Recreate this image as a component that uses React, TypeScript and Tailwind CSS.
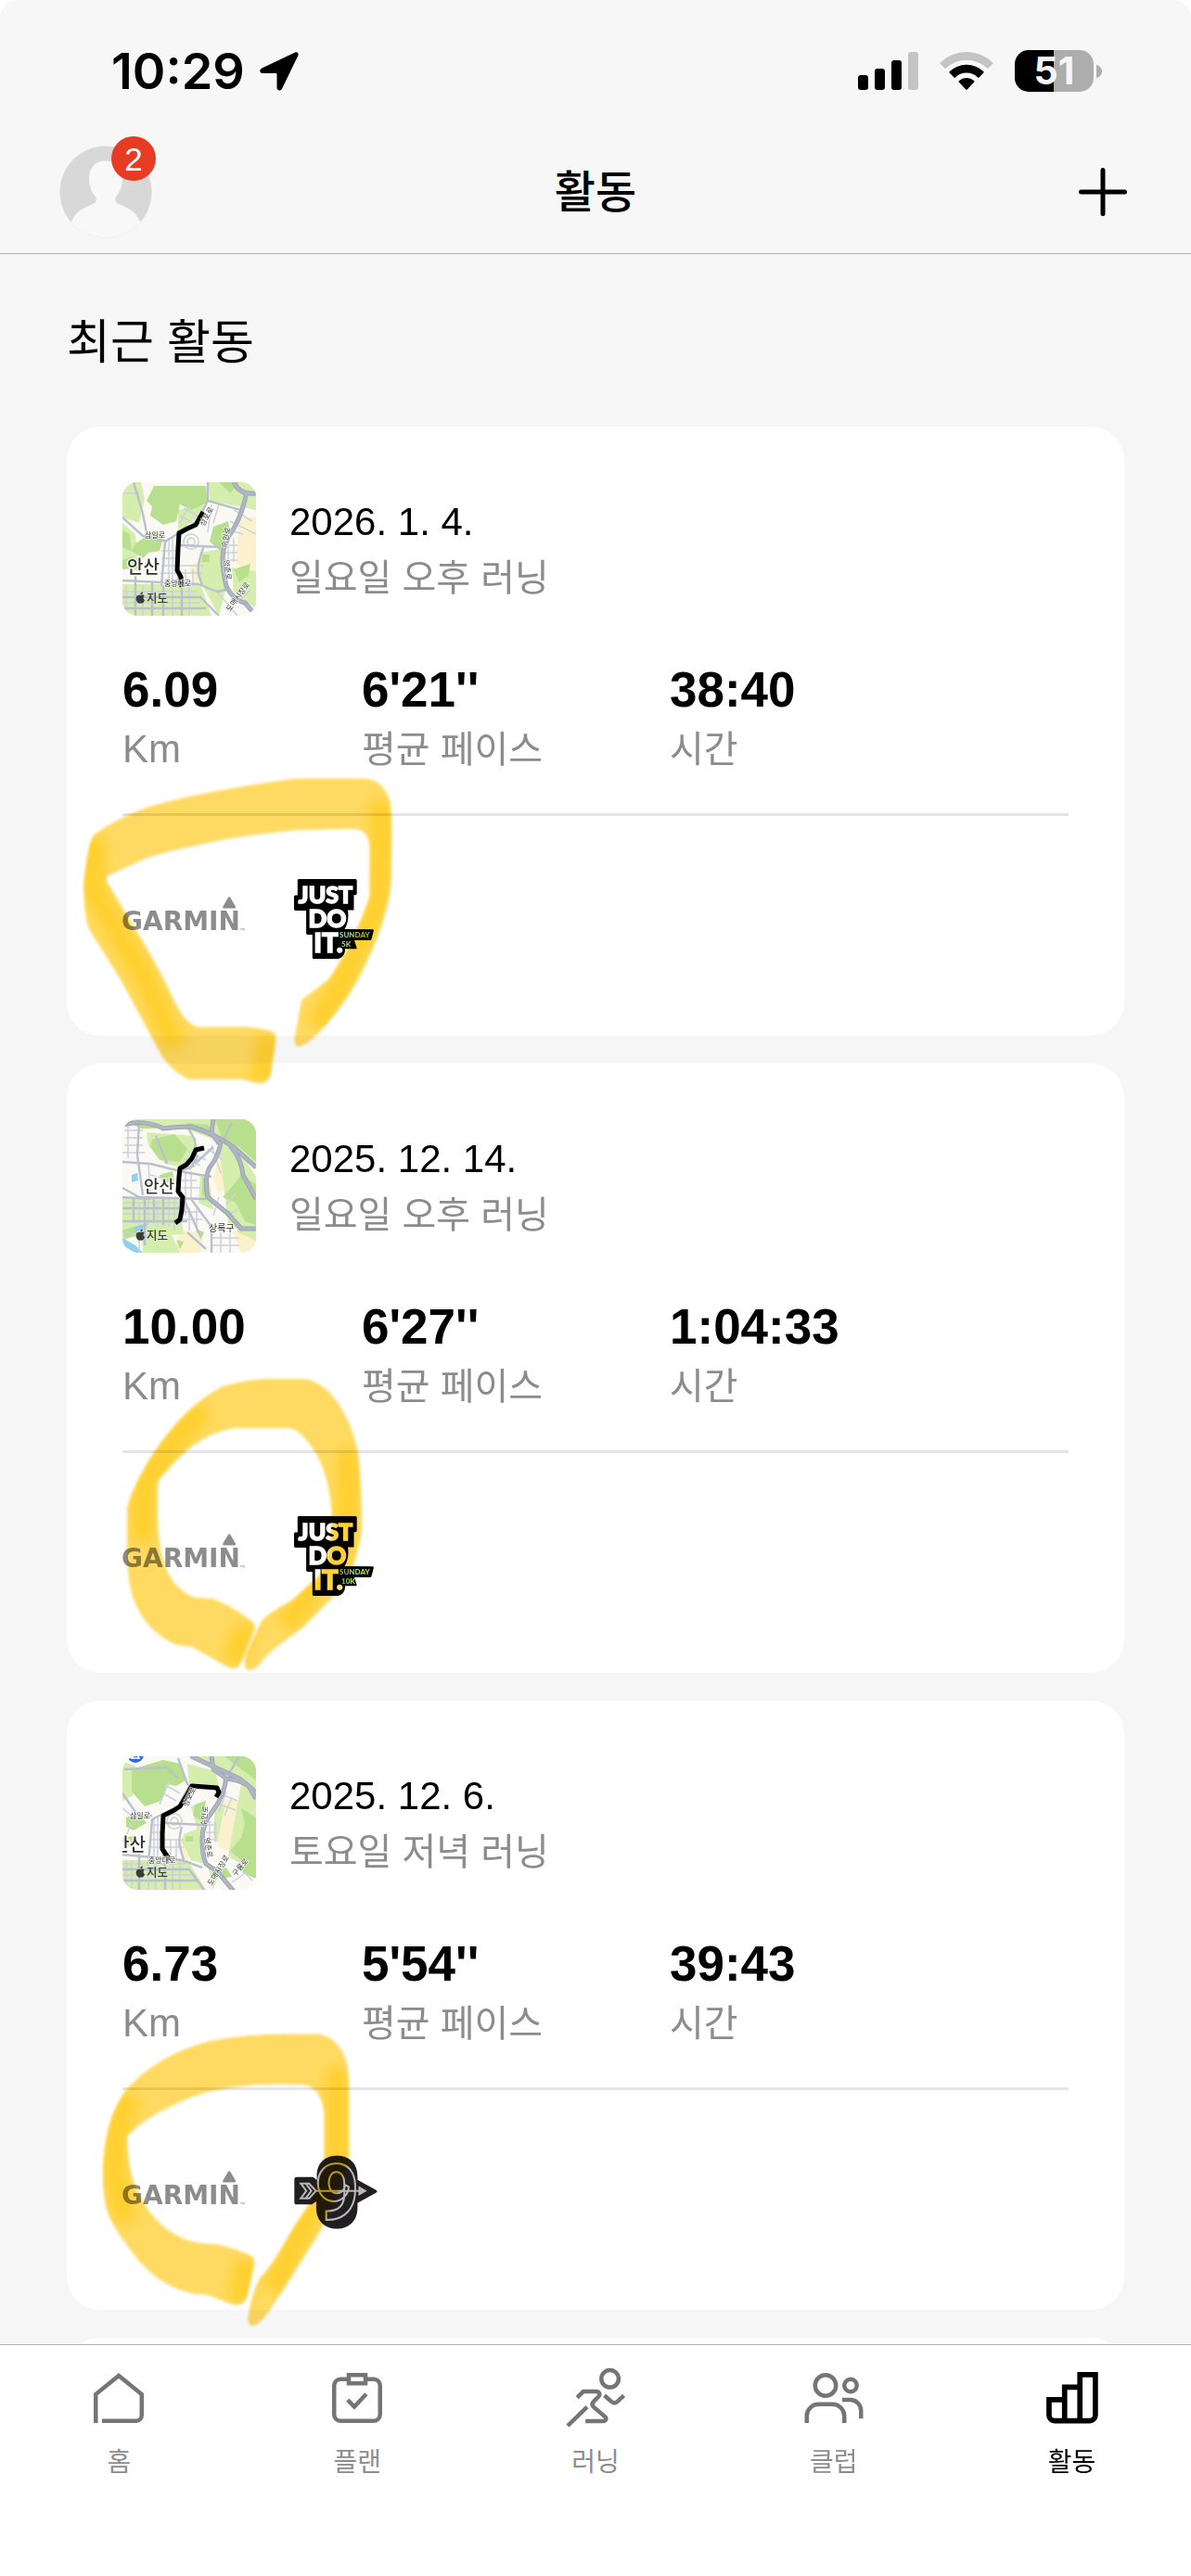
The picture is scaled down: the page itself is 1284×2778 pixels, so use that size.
import { clsx } from 'clsx'
import React from 'react'

interface MapLabel {
  text: string
  x: number
  y: number
  size: number
  rotate?: number
  bold?: boolean
}

interface MapData {
  hills: string
  parks: string
  sand: string
  water?: string
  highways: string
  streets: string
  lanes: string
  route: string
  labels: MapLabel[]
  station?: boolean
}

interface MarkData {
  id: string
  position: string
  shape: string
  dense: string[]
}

interface Activity {
  id: string
  date: string
  title: string
  distance: string
  pace: string
  time: string
  map: MapData
  badge: React.ReactNode
  mark: MarkData
}

/* ---------- Status bar ---------- */

const StatusBar: React.FC = () => (
  <div className="flex h-[141px] items-center justify-between pt-3 pr-24 pl-30">
    <div className="flex items-center gap-4">
      <span className="font-['Inter',sans-serif] text-[54px] leading-none font-semibold">
        10:29
      </span>
      <svg width="42" height="42" viewBox="0 0 42 42">
        <path
          d="M38.2.6 2.4 17.4C-.8 19-.2 23 3 23h14.6c.6 0 .9.3.9.9V38.6c0 3.4 4.2 4 5.6.9L41.3 4C42.4 1.6 40.5-.4 38.2.6Z"
          fill="#000"
        />
      </svg>
    </div>
    <div className="flex items-center gap-[23px]">
      <svg width="65" height="42" viewBox="0 0 65 42">
        <rect y="25" width="11" height="16" rx="3" />
        <rect x="18" y="18" width="11" height="23" rx="3" />
        <rect x="36" y="9" width="11" height="32" rx="3" />
        <rect x="54" width="11" height="41" rx="3" fill="#c4c4c4" />
      </svg>
      <svg width="58" height="42" viewBox="0 0 58 42">
        <path
          d="M.8 11.5a40.5 40.5 0 0 1 56.4 0c.4.4.4 1 0 1.4L52.5 17.5c-.4.4-1 .4-1.4 0a32 32 0 0 0-44.2 0c-.4.4-1 .4-1.4 0L.8 12.9c-.4-.4-.4-1 0-1.4Z"
          fill="#c4c4c4"
        />
        <path d="M10.6 21.2a26.5 26.5 0 0 1 36.8 0c.4.4.4 1 0 1.4l-4.9 4.8c-.4.4-1 .4-1.4 0a17.5 17.5 0 0 0-24.2 0c-.4.4-1 .4-1.4 0l-4.9-4.8c-.4-.4-.4-1 0-1.4Z" />
        <path d="M20.7 31.2a12.6 12.6 0 0 1 16.6 0c.4.4.4 1 0 1.4l-7.6 7.8c-.4.4-1 .4-1.4 0l-7.6-7.8c-.4-.4-.4-1 0-1.4Z" />
      </svg>
      <div className="flex items-center gap-[3px]">
        <div className="flex h-[45px] w-[85px] items-center justify-center rounded-[15px] bg-linear-to-r from-black from-50% to-[#adadad] to-50% font-['Inter',sans-serif] text-[41px] leading-none font-bold text-[#f7f7f7]">
          51
        </div>
        <svg width="6" height="14" viewBox="0 0 6 14">
          <path d="M0 0c4 1 6 4 6 7s-2 6-6 7Z" fill="#adadad" />
        </svg>
      </div>
    </div>
  </div>
)

/* ---------- Navigation bar ---------- */

const NavBar: React.FC = () => (
  <div className="grid h-[132px] grid-cols-3 items-center px-16">
    <button type="button" aria-label="프로필" className="relative justify-self-start">
      <svg width="100" height="100" viewBox="0 0 100 100">
        <clipPath id="avatar">
          <circle cx="50" cy="50" r="49.5" />
        </clipPath>
        <g clipPath="url(#avatar)">
          <rect width="100" height="100" fill="#d8d8d8" />
          <path
            d="M50 16.500c-11 0-18 7-18 19 0 8 2.500 14.500 6.500 19 2.500 3 1.500 6-1.500 8-10 4.500-19 8-23.500 18.500L10 100h80l-3.500-19c-4.500-10.500-13.500-14-23.500-18.500-3-2-4-5-1.500-8 4-4.500 6.500-11 6.500-19 0-12-7-19-18-19Z"
            fill="#f8f8f8"
          />
        </g>
      </svg>
      <span className="absolute -top-2.5 left-14 flex size-12 items-center justify-center rounded-full bg-[#e63c24] font-['Liberation_Sans',sans-serif] text-[35px] leading-none text-white">
        2
      </span>
    </button>
    <h1 className="pt-[2px] text-center text-[48px] leading-[72px] font-medium">
      활동
    </h1>
    <button type="button" aria-label="추가" className="mr-1 justify-self-end">
      <svg width="54" height="54" viewBox="0 0 54 54">
        <path
          d="M27 3.500v47M3.500 27h47"
          stroke="#000"
          strokeWidth="5"
          strokeLinecap="round"
        />
      </svg>
    </button>
  </div>
)

/* ---------- Map thumbnail ---------- */

const RouteMap: React.FC<{ map: MapData }> = ({ map }) => (
  <svg
    viewBox="0 0 144 144"
    className="size-36 shrink-0 rounded-2xl bg-[#fbf9f3]"
  >
    <path d={map.sand} fill="#fbf1cc" />
    <path d={map.parks} fill="#d5edad" />
    <path d={map.hills} fill="#b7df8e" />
    {map.water && <path d={map.water} fill="#8fd0ee" />}
    <g fill="none" strokeLinejoin="round">
      <path d={map.lanes} stroke="#cdd1db" strokeWidth="1.5" />
      <path d={map.streets} stroke="#bac0ce" strokeWidth="2.4" />
      <path d={map.highways} stroke="#9ba2b3" strokeWidth="5" />
      <path d={map.highways} stroke="#afb5c4" strokeWidth="3.2" />
      <path d={map.route} stroke="#000" strokeWidth="5" />
    </g>
    {map.station && (
      <g>
        <circle cx="14" cy="-2" r="9" fill="#2f6be0" />
        <path d="M9 2h10M11 0v3M17 0v3" stroke="#fff" strokeWidth="1.5" />
      </g>
    )}
    {map.labels.map((label, i) => (
      <text
        key={i}
        x={label.x}
        y={label.y}
        fontSize={label.size}
        fontWeight={label.bold ? 500 : 400}
        transform={
          label.rotate
            ? `rotate(${label.rotate} ${label.x} ${label.y})`
            : undefined
        }
        fill="#333"
        stroke="#fff"
        strokeWidth={label.bold ? 3 : 1.5}
        strokeOpacity=".8"
        paintOrder="stroke"
      >
        {label.text}
      </text>
    ))}
    {/* Map provider mark */}
    <path
      d="M19.5 122.200c1.300-.7 3-1 4.200.2-1.700 1.200-1.500 3.800.4 4.700-.6 2-1.900 3.800-3.300 3.600-.8-.3-1.600-.3-2.400 0-2 .3-4-3.200-3.700-5.900.3-2.400 2.600-3.700 4.800-2.600Zm-.2-.8c0-1.700 1-2.900 2.600-3.200 0 1.700-1 3.100-2.600 3.200Z"
      fill="#3b3b3b"
    />
    <text x="26" y="130" fontSize="12.5" fontWeight="500" fill="#3b3b3b">
      지도
    </text>
  </svg>
)

/* ---------- Card footer logos ---------- */

const GarminLogo: React.FC = () => (
  <svg width="132" height="86" viewBox="0 0 132 86" fill="#8c8c8c">
    <text
      x="-1"
      y="55"
      fontSize="28"
      fontWeight="700"
      fontFamily="'DejaVu Sans', sans-serif"
    >
      GARMIN
    </text>
    <path d="M113.8 20.200c.7-1.200 2-1.200 2.700 0l5.400 9.200c.6 1.200.2 2-1.100 2h-11.300c-1.300 0-1.700-.8-1.100-2Z" />
    <text x="126" y="57" fontSize="6" fontFamily="'Liberation Sans', sans-serif">
      ™
    </text>
  </svg>
)

const JustDoItBadge: React.FC<{ distance: string }> = ({ distance }) => (
  <svg width="90" height="86" viewBox="0 0 90 86">
    <defs>
      <linearGradient id={`badge-${distance}`} x1="0" x2="1">
        <stop offset="0" stopColor="#6de3c0" />
        <stop offset=".6" stopColor="#9be05a" />
        <stop offset="1" stopColor="#c3dd3f" />
      </linearGradient>
    </defs>
    <path
      d="M6.5 0h60.500c1 0 1.700.7 1.700 1.700V15.500c0 1-.7 1.700-1.700 1.700h-1.500v16.300H59c1 6 .5 14-3.500 20.500l30 .3c1 0 1.500.7 1.300 1.700l-2.300 8.700c-.3 1-1 1.300-2 1.300H66l2.500 8c.3 1-.2 1.300-1.200 1.300H56c.5 6-4 11-10 11H22.500c-1 0-1.700-.7-1.700-1.700V60h-5c-1 0-1.700-.7-1.700-1.700V34H2.700C1.700 34 1 33.300 1 32.300V19.200c0-1 .7-1.700 1.700-1.700h2.100V1.700C4.800.7 5.500 0 6.500 0Z"
      fill="#000"
    />
    <g
      fill="#fff"
      stroke="#fff"
      strokeWidth="1.5"
      fontWeight="900"
      fontFamily="'Lato', sans-serif"
      textAnchor="middle"
    >
      <text x="35" y="26" fontSize="25">
        JUST
      </text>
      <text x="37" y="52" fontSize="26">
        DO
      </text>
      <text x="38" y="79" fontSize="29">
        IT.
      </text>
    </g>
    <g
      fill={`url(#badge-${distance})`}
      fontWeight="900"
      fontFamily="'Lato', sans-serif"
    >
      <text x="50" y="63" fontSize="8">
        SUNDAY
      </text>
      <text x="52" y="73" fontSize="8">
        {distance}
      </text>
    </g>
  </svg>
)

const NineBadge: React.FC = () => (
  <svg width="93" height="86" viewBox="0 0 280 258">
    <g transform="translate(-3 0)">
      <path
        d="M14 77h54l12 10V74C80 30 108 8 145 8s67 22 67 66v12l60 33c5 3 5 6 0 9l-60 33v16c0 44-30 68-67 68s-67-24-67-68v-21l-14 10H14c-4 0-7-3-7-7V84c0-4 3-7 7-7Z"
        fill="#201e20"
      />
      <g fill="none" stroke="#b8b8b8" strokeWidth="6">
        <text
          x="145"
          y="214"
          textAnchor="middle"
          fontSize="252"
          fontWeight="700"
          fontFamily="'Roboto', sans-serif"
        >
          9
        </text>
        <path d="M28 98h27l22 24-22 24H28l18-24ZM44 98l18 24-18 24M78 122h142" />
      </g>
      <path d="m215 106 28 16-28 16Z" fill="#b8b8b8" />
    </g>
  </svg>
)

/* ---------- Highlighter stroke ---------- */

const HighlightMark: React.FC<{ mark: MarkData }> = ({ mark }) => (
  <svg
    viewBox="0 0 1140 1080"
    className={clsx(
      'pointer-events-none absolute left-2 z-10 w-[380px] mix-blend-multiply',
      mark.position,
    )}
  >
    <defs>
      <clipPath id={`clip-${mark.id}`}>
        <path d={mark.shape} />
      </clipPath>
      <filter id={`soft-${mark.id}`}>
        <feGaussianBlur stdDeviation="5" />
      </filter>
      <filter id={`wide-${mark.id}`} x="-50%" y="-50%" width="200%" height="200%">
        <feGaussianBlur stdDeviation="20" />
      </filter>
    </defs>
    <g filter={`url(#soft-${mark.id})`}>
      <g clipPath={`url(#clip-${mark.id})`}>
        <path d={mark.shape} fill="#ffda62" />
        <g
          fill="none"
          stroke="#ffcf2c"
          strokeWidth="70"
          filter={`url(#wide-${mark.id})`}
        >
          {mark.dense.map((d) => (
            <path key={d} d={d} />
          ))}
        </g>
      </g>
    </g>
  </svg>
)

/* ---------- Data ---------- */

const activities: Activity[] = [
  {
    id: 'a1',
    date: '2026. 1. 4.',
    title: '일요일 오후 러닝',
    distance: '6.09',
    pace: `6'21''`,
    time: '38:40',
    map: {
      parks:
        'M0 0h20l4 18-6 26-18-6ZM92 0h52v30l-50-10ZM0 44l14 12 4 40-18-4ZM84 76l22-4 6 40-8 32-16-30-8-12ZM0 110h84l12 34H0ZM118 92l26 4v40l-24-16ZM60 30l30-6-6 12-24 18Z',
      hills:
        'M26 20 34 4h56l2 18-18 8-12-6-4 18-14 4-14-10 2-10ZM14 66l22-14 8 8-4 14-12 2-6 6-12-8ZM0 52l8 4 2 18-10-4ZM98 48l16-6 2 14-8 20-14-12ZM86 78h8v8h-8ZM120 94l18-6-2 12-10 8ZM0 84l10-4 10 12-20 2ZM104 0h22l-10 12Z',
      sand: 'M126 38h18v60l-22-10ZM72 92l12-10 6 22-12 10ZM60 128h30v16H60Z',
      highways:
        'M120 0q6 14 24 12M134 10q-4 22-14 40-12 16-12 32 0 14 4 30 8 16 20 18l14 16',
      streets:
        'M12 0l10 34 4 20M0 38l22 20 26 6M92 0v20l36 10M92 20 78 48 62 54 46 64l-4 48M60 52v60M62 68l44 2M88 68q-8 22-6 30l4 14M0 106l82 4 20 8 10-2M14 100v44M32 108v36M44 112v32M64 112v32M0 124h84l20 20M0 136h90',
      lanes:
        'M0 12h18M66 28l18 10M62 36l18 10M72 24l-10 20M96 24l-4 30M104 24l-6 20M120 30l20 12M116 42l28 14M110 50l20 6M114 60v26M120 60v26M108 68h16M108 76h16M108 84h16M42 74h18M42 82h18M42 90h46M40 98h46M50 60v54M54 60v54M68 94v18M76 94v18M74 56a8 8 0 1 0 .1 0M74 60a4 4 0 1 0 .1 0M4 112v32M22 112v32M54 114v30M72 112v32M0 118h80M0 130h84M102 118l22 26M124 130l14-14',
      route: 'M87 32 79 46 70 50 61 55l-1 16-1 24 4 7 1 11',
      labels: [
        { text: '안산', x: 5, y: 98, size: 19, bold: true },
        { text: '삼일로', x: 24, y: 60, size: 8 },
        { text: '중앙대로', x: 45, y: 112, size: 8 },
        { text: '성포로', x: 88, y: 48, size: 8, rotate: -62 },
        { text: '수인로', x: 112, y: 71, size: 8, rotate: -78 },
        { text: '양춘로', x: 109, y: 84, size: 8, rotate: 82 },
        { text: '도매시장로', x: 116, y: 140, size: 8, rotate: -54 },
      ],
    },
    badge: <JustDoItBadge distance="5K" />,
    mark: {
      id: 'm1',
      position: 'top-[360px]',
      shape:
        'M65 240Q130 190 240 150 400 102 720 58L940 58Q1000 62 1020 130 1030 180 1027 260L1025 400Q1005 560 900 740 830 850 760 910 715 945 711 905L735 775 820 710Q900 600 955 440L955 270Q945 225 910 222L720 226Q520 245 400 275 290 296 230 318L105 375V390L200 550Q270 660 330 790 370 865 410 862H560Q620 868 645 880 655 890 652 910L635 1020Q620 1050 590 1045L540 1032H370Q320 1010 285 960L150 710 50 550Q32 520 30 400 38 320 45 300 48 260 65 240Z',
      dense: [
        'M990 130Q1000 300 985 460L860 730 780 860',
        'M70 250Q60 340 65 430L220 690 330 930',
        'M630 890 600 1040',
      ],
    },
  },
  {
    id: 'a2',
    date: '2025. 12. 14.',
    title: '일요일 오후 러닝',
    distance: '10.00',
    pace: `6'27''`,
    time: '1:04:33',
    map: {
      parks:
        'M0 0h144v50L120 34 94 20 60 8 30 8 0 6ZM26 14l50 4 6 16-16 18-20-4-18-20ZM0 84h60l6 40-66 4ZM20 112l30 6 12 26H22ZM84 60l10 8 4 30-16-8ZM104 30l14-8 26 40v70l-30-20ZM112 70l32 10v50l-20-8Z',
      hills:
        'M32 22l24-6 14 16-8 14-22-2-10-14ZM100 0h44v46L126 30 106 18ZM128 60l16 10v44l-12-4-10-20-14-6 14-16ZM12 6l18-2 6 6H20ZM40 60l14-4 2 10-12 4ZM86 62l6 4 2 22-8-6ZM80 118l8 4-4 8ZM0 120l12-4 4 8-14 6ZM70 4l22 2 4 8-24-6ZM58 130l8 2-4 8Z',
      sand: 'M104 40l18 6-4 24-14 10-6-16ZM62 120l26 2-4 22H56ZM118 120h26v24h-16Z',
      water: 'M10 60l6-2 1 8-7 2ZM0 128l14 8 8 8h-8L0 136ZM12 116l16-4-2 4-12 6Z',
      highways:
        'M0 6q24-6 44 4 16-2 30-2 26 8 46 22l24 22M98 0l-2 14 8 12M106 24q-2 16-12 28-6 12-2 32l22 18 14 16h16M116 28q12 14 14 32l14 26',
      streets:
        'M18 4l-2 34 6 44M0 46l30 2 32 8 16-6M36 18l12 30M70 8l8 14 2 20-8 12M62 52v60M60 56l36 6M0 74l18 10 72 2M24 86v50M0 96h66M0 110h70M44 86v28M66 86l18 40M74 86l22 30v28M78 48l20-18M0 84l30 2M12 86v26M34 86v26M70 122l20 18M118 4l-10 20',
      lanes:
        'M2 12h20M4 20h18M2 28h20M6 6v36M0 36h24M70 34l20 10M66 42l18 8M92 32l16 12M96 28l10 30M64 66h16M64 74h20M68 56v48M74 56v30M18 90v24M28 88v26M38 88v28M50 86v30M56 86v34M0 90h60M0 102h66M64 100h20M64 108h22M72 96v24M80 96v26M98 88l20 16M104 84l-6 20M112 92l10-12M112 104l12-6M96 128h30M96 136h30M106 122v22M116 122v22M0 122l30 4M18 126v18M30 60l14 4M28 48l2 30',
      route: 'M88 31 79 33 75 42l-6 7-7 4-1 9-1 16 5 6-1 14-2 10-5 4',
      labels: [
        { text: '안산', x: 23, y: 79, size: 18, bold: true },
        { text: '상록구', x: 93, y: 121, size: 10 },
      ],
    },
    badge: <JustDoItBadge distance="10K" />,
    mark: {
      id: 'm2',
      position: 'top-[323px]',
      shape:
        'M170 470Q180 430 210 370 235 320 270 270 370 130 480 75 560 50 640 50H740Q790 52 840 110 900 190 918 290 930 380 930 540 915 660 860 735L740 855 640 930Q610 960 600 975 575 1000 555 990 545 975 560 930L605 835Q630 805 700 770L790 690Q835 620 832 480 825 370 780 290 730 210 690 210H520Q450 220 380 270 310 330 270 385V500Q272 620 310 690 340 740 390 758L450 762Q510 785 575 835 590 850 582 865L540 970Q525 1000 490 980L380 918 330 912Q230 870 190 760 170 700 170 600Z',
      dense: [
        'M420 150Q280 280 220 420L225 580',
        'M880 280Q900 460 860 620L680 850',
        'M560 850 510 970',
      ],
    },
  },
  {
    id: 'a3',
    date: '2025. 12. 6.',
    title: '토요일 저녁 러닝',
    distance: '6.73',
    pace: `5'54''`,
    time: '39:43',
    map: {
      parks:
        'M70 0h74v36L120 22 96 8ZM0 6l14 4-2 32-12 6ZM70 8l30 8 4 16-32-2ZM74 54l16-6-2 22-6 14ZM66 84l20-8 2 40-14-4-10-20ZM100 50l10 4-8 40-4-10ZM0 112h70l20 32H0ZM128 30l16 6v90l-30-18ZM92 118l12 8-6 18Z',
      hills:
        'M10 14 44 4l18 4 6 18-10 6-10-2-6 18-18 6-14-16ZM4 66l16-4 6 10-14 8-8-4ZM128 56l16 10v66l-14-6-4-16-10-8 12-14 4-16ZM78 52l12-4-4 22-10-6ZM68 86h8v6h-8ZM110 0h34v26l-16-12ZM0 88l12-2 4 8-14 4ZM98 124l14-4 6 10-10 2Z',
      sand: 'M108 46l20 2 4 34-14 22-14-6-4-22ZM60 90l10-4 4 22-8 4Z',
      highways:
        'M74 0l26 12 26 12 10 8 8 14M96 0l2 14 14 10q22 2 32 16M112 22q-2 20-14 36-12 14-12 32 0 16 4 26l12 8 20 24',
      streets:
        'M60 2l10 28 4 2M0 40l18 26 14-2M72 32 60 54 44 62 32 68l-4 48M44 62v48M46 72l42 2M64 76q-4 16-2 22l4 14M0 106l64 6 22 8M0 122h72l16 22M18 104v40M46 112v32M0 134h80M2 14l46-2 12 12M126 0l-12 20',
      lanes:
        'M48 32l14 8M44 40l14 8M50 28l-10 24M104 40l20 8M100 50l22 8M112 38l-8 22M118 44l-8 20M94 70v22M100 70v22M90 74h12M90 82h12M90 90h10M30 74h14M30 82h14M30 90h36M28 98h38M34 66v48M38 66v48M52 90v22M58 90v22M56 62a8 8 0 1 0 .1 0M56 66a4 4 0 1 0 .1 0M4 112v32M10 112v32M28 116v28M36 116v28M54 114v30M62 114v30M0 116h68M0 128h76M108 130l10 14M118 136l14-10 8 8M0 56l12 10-8 20',
      route: 'M101 44l3-5-2-5-27-2-5 9-8 13-6 4-12 6-1 20v16l6 9 1 3',
      labels: [
        { text: '안산', x: -10, y: 102, size: 19, bold: true },
        { text: '삼일로', x: 8, y: 67, size: 8 },
        { text: '중앙대로', x: 28, y: 115, size: 8 },
        { text: '성포로', x: 70, y: 55, size: 8, rotate: -65 },
        { text: '수인로', x: 90, y: 76, size: 8, rotate: -84 },
        { text: '양춘로', x: 88, y: 88, size: 8, rotate: 80 },
        { text: '도매시장로', x: 96, y: 140, size: 8, rotate: -58 },
        { text: '구룡로', x: 122, y: 130, size: 8, rotate: -50 },
      ],
      station: true,
    },
    badge: <NineBadge />,
    mark: {
      id: 'm3',
      position: 'top-[336px]',
      shape:
        'M92 520Q95 350 165 255 260 140 440 92 560 70 700 70H790Q850 80 878 150 890 190 890 260V470Q870 560 795 710L700 860 640 955Q600 1015 575 1015 555 1010 565 970 575 910 600 860 640 820 700 710L760 620Q805 560 808 460V330Q800 240 735 235 520 225 380 275 240 330 172 400 170 500 205 580 260 690 340 725 380 748 460 750 530 765 575 790 588 800 582 820L560 920Q545 955 510 945L430 915 390 912Q270 890 190 780 110 680 100 620 92 580 92 520Z',
      dense: [
        'M190 270Q120 380 130 520L170 680',
        'M850 180V470L720 740 640 900',
        'M560 800 530 940',
      ],
    },
  },
]

/* ---------- Activity card ---------- */

const Stat: React.FC<{ value: string; label: string }> = ({ value, label }) => (
  <div className="flex flex-col-reverse leading-[64px]">
    <dt
      className={clsx(
        'text-[#8c8c8c]',
        label === 'Km' ? 'text-[42px]' : 'text-[40px]',
      )}
    >
      {label}
    </dt>
    <dd className="text-[53px] font-bold">{value}</dd>
  </div>
)

const ActivityCard: React.FC<{ activity: Activity }> = ({ activity }) => (
  <article className="relative shrink-0 rounded-[36px] bg-white px-15 pt-15 pb-[83px]">
    <div className="flex items-center gap-9">
      <RouteMap map={activity.map} />
      <div className="pt-[2px] leading-[60px]">
        <h3 className="text-[42px]">{activity.date}</h3>
        <p className="text-[40px] text-[#8c8c8c]">{activity.title}</p>
      </div>
    </div>
    <dl className="mt-12 grid grid-cols-[258px_332px_1fr]">
      <Stat value={activity.distance} label="Km" />
      <Stat value={activity.pace} label="평균 페이스" />
      <Stat value={activity.time} label="시간" />
    </dl>
    <div className="mt-[37px] flex gap-13 border-t-3 border-[#e5e5e5] pt-[68px]">
      <GarminLogo />
      {activity.badge}
    </div>
    <HighlightMark mark={activity.mark} />
  </article>
)

/* ---------- Tab bar ---------- */

const tabs = [
  {
    label: '홈',
    icon: <path d="M3.75 21V10.700L12 4l8.250 6.700v7.550a2 2 0 0 1-2 2H6" />,
  },
  {
    label: '플랜',
    icon: (
      <>
        <rect x="3.75" y="5.25" width="16.5" height="15" rx="2.25" />
        <path d="M9 3.750h6v3H9Z" className="fill-white" />
        <path d="M8.600 12.700l2.400 2.500 4.300-4.600" />
      </>
    ),
  },
  {
    label: '러닝',
    icon: (
      <>
        <circle cx="17.2" cy="5.1" r="3.1" />
        <path d="M15.2 11.100l2.500 2.200c.7.6 1.500.6 2.200 0L22.200 11.100M5.400 11.900l2.200-2.200h4.600c1.200 0 1.600 1.100.9 1.800L11.400 13.200c-.7.7-.7 1.400-.1 2l4.100 3.500c.7.7.4 1.600-.6 1.600H8.400M9 15.200 2 22" />
      </>
    ),
  },
  {
    label: '클럽',
    icon: (
      <>
        <circle cx="9" cy="7.5" r="3.75" />
        <circle cx="18" cy="7.5" r="2.25" />
        <path d="M2.250 21v-2.500a4.250 4.250 0 0 1 4.250-4.250h5a4.250 4.250 0 0 1 4.250 4.250V21M15 12.700h2.900a3.850 3.850 0 0 1 3.850 3.850v2.850" />
      </>
    ),
  },
  {
    label: '활동',
    active: true,
    icon: (
      <path d="M9.250 12.650h-5.600v5.550a2 2 0 0 0 2 2h12.650a2 2 0 0 0 2-2V3.650h-5.550V20.200M14.750 8.100h-5.500V20.200" />
    ),
  },
]

const TabBar: React.FC = () => (
  <nav className="grid shrink-0 grid-cols-5 border-t border-[#b0b0b0] bg-white pt-[21px] pb-[102px]">
    {tabs.map(({ label, icon, active }) => (
      <a
        key={label}
        href="#"
        aria-current={active ? 'page' : undefined}
        className="flex flex-col items-center gap-3.5"
      >
        <svg
          viewBox="0 0 24 24"
          fill="none"
          strokeWidth={active ? 1.9 : 1.5}
          className={clsx('size-18', active ? 'stroke-black' : 'stroke-[#757575]')}
        >
          {icon}
        </svg>
        <span
          className={clsx(
            'text-[28px] leading-10',
            active ? 'text-black' : 'text-[#8d8d8d]',
          )}
        >
          {label}
        </span>
      </a>
    ))}
  </nav>
)

export default function App() {
  return (
    <div className="flex h-screen flex-col overflow-hidden rounded-t-[20px] bg-[#f6f6f6] font-['Liberation_Sans','Noto_Sans_CJK_KR',sans-serif] text-black">
      <header className="shrink-0 border-b border-[#b0b0b0] bg-[#f7f7f7]">
        <StatusBar />
        <NavBar />
      </header>
      <main className="min-h-0 flex-1 overflow-y-auto px-[72px] pt-15 [scrollbar-width:none]">
        <h2 className="text-[51px] leading-[72px]">최근 활동</h2>
        <div className="mt-[54px] flex flex-col gap-[30px]">
          {activities.map((activity) => (
            <ActivityCard key={activity.id} activity={activity} />
          ))}
          <article className="h-40 shrink-0 rounded-[36px] bg-white" />
        </div>
      </main>
      <TabBar />
    </div>
  )
}
